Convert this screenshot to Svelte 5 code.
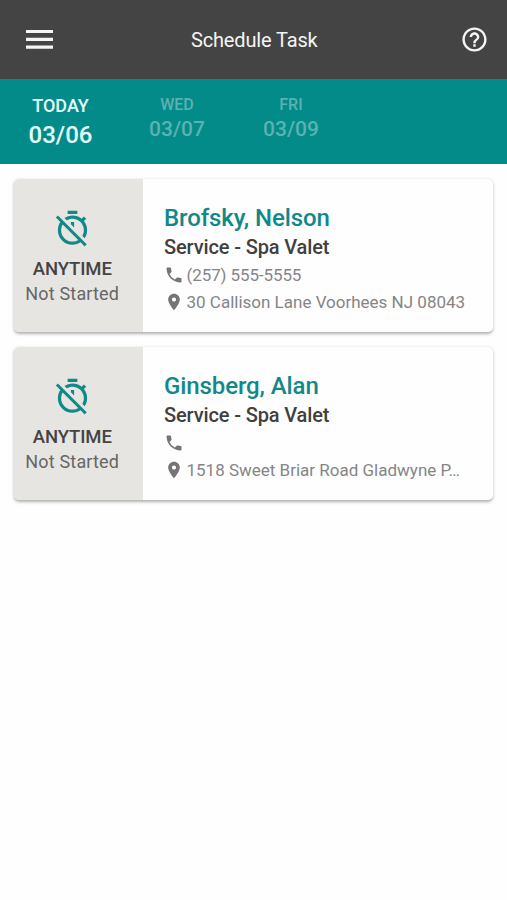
<script>
  const days = [
    { label: 'TODAY', date: '03/06', active: true },
    { label: 'WED', date: '03/07', active: false },
    { label: 'FRI', date: '03/09', active: false }
  ];
  const tasks = [
    { name: 'Brofsky, Nelson', job: 'Service - Spa Valet', phone: '(257) 555-5555', address: '30 Callison Lane Voorhees NJ 08043' },
    { name: 'Ginsberg, Alan', job: 'Service - Spa Valet', phone: '', address: '1518 Sweet Briar Road Gladwyne P…' }
  ];
</script>

<div class="screen">
  <header>
    <svg class="menu" viewBox="0 0 27 19"><path d="M0 0h27v3.1H0zM0 7.8h27v3.1H0zM0 15.6h27v3.1H0z" /></svg>
    <h1>Schedule Task</h1>
    <svg class="help" viewBox="0 0 24 24"><path d="M11 18h2v-2h-2v2zm1-16C6.48 2 2 6.48 2 12s4.480 10 10 10 10-4.480 10-10S17.520 2 12 2zm0 18c-4.410 0-8-3.590-8-8s3.590-8 8-8 8 3.590 8 8-3.590 8-8 8zm0-14c-2.210 0-4 1.790-4 4h2c0-1.100.9-2 2-2s2 .9 2 2c0 2-3 1.750-3 5h2c0-2.250 3-2.500 3-5 0-2.210-1.790-4-4-4z" /></svg>
  </header>

  <nav>
    {#each days as day}
      <div class="day" class:active={day.active}>
        <span class="label">{day.label}</span>
        <span class="date">{day.date}</span>
      </div>
    {/each}
  </nav>

  <main>
    {#each tasks as task}
      <article>
        <div class="status">
          <svg class="timer" viewBox="0 0 24 24"><path d="M19.04 4.55l-1.42 1.42C16.07 4.74 14.12 4 12 4c-1.83 0-3.53.55-4.95 1.48l1.46 1.46C9.53 6.35 10.73 6 12 6c3.87 0 7 3.13 7 7 0 1.27-.35 2.47-.94 3.49l1.45 1.45C20.45 16.53 21 14.83 21 13c0-2.12-.74-4.07-1.97-5.61l1.42-1.42-1.41-1.42zM15 1H9v2h6V1zm-4 8.44l2 2V8h-2v1.44zM3.02 4L1.75 5.27 4.5 8.03C3.55 9.45 3 11.16 3 13c0 4.97 4.02 9 9 9 1.84 0 3.55-.55 4.98-1.5l2.5 2.5 1.27-1.27-7.71-7.71L3.02 4zM12 20c-3.87 0-7-3.13-7-7 0-1.28.35-2.48.95-3.52l9.56 9.56c-1.03.61-2.23.96-3.51.96z" /></svg>
          <span class="when">ANYTIME</span>
          <span class="state">Not Started</span>
        </div>
        <div class="info">
          <h2>{task.name}</h2>
          <h3>{task.job}</h3>
          <div class="row phone">
            <svg viewBox="0 0 24 24"><path d="M6.62 10.79c1.44 2.83 3.76 5.14 6.59 6.59l2.2-2.2c.27-.27.67-.36 1.02-.24 1.12.37 2.33.57 3.57.57.55 0 1 .45 1 1V20c0 .55-.45 1-1 1-9.39 0-17-7.61-17-17 0-.55.45-1 1-1h3.5c.55 0 1 .45 1 1 0 1.25.2 2.45.57 3.57.11.35.03.74-.25 1.02l-2.2 2.2z" /></svg>
            <span>{task.phone}</span>
          </div>
          <div class="row address">
            <svg viewBox="0 0 24 24"><path d="M12 2C8.130 2 5 5.130 5 9c0 5.250 7 13 7 13s7-7.750 7-13c0-3.870-3.130-7-7-7zm0 9.500c-1.380 0-2.500-1.120-2.500-2.500s1.120-2.500 2.500-2.500 2.500 1.120 2.500 2.500-1.120 2.500-2.500 2.500z" /></svg>
            <span>{task.address}</span>
          </div>
        </div>
      </article>
    {/each}
  </main>
</div>

<style>
  :global(body) { background: #fefefe; }
  .screen {
    height: 900px;
    background: #fefefe;
    font-family: Roboto, "Liberation Sans", sans-serif;
    overflow: hidden;
  }
  .screen * { box-sizing: border-box; }
  svg { display: block; flex: none; fill: currentColor; }
  h1, h2, h3 { margin: 0; white-space: nowrap; }
  header {
    display: flex;
    align-items: center;
    justify-content: space-between;
    height: 79px;
    padding: 0 17.500px 0 26px;
    background: #444;
    color: #f5f5f5;
  }
  .menu { width: 27px; height: 19px; }
  .help { width: 29px; height: 29px; }
  h1 { font-size: 20px; font-weight: 400; line-height: 24px; letter-spacing: -.14px; padding: 1px 5px 0 0; }
  nav {
    display: flex;
    height: 84.500px;
    padding-left: 3.500px;
    background: #038b8a;
  }
  .day {
    display: flex;
    flex-direction: column;
    align-items: center;
    width: 114px;
    padding: 16px 0 0 5px;
    color: #5bb2b2;
    font-weight: 500;
  }
  .day.active { color: #e6ffff; padding-left: 0; }
  .label { font-size: 16px; line-height: 20px; }
  .date { font-size: 21px; line-height: 24px; padding-top: 2px; }
  .active .label { font-size: 18px; line-height: 22px; }
  .active .date { font-size: 24px; line-height: 28px; padding-top: 4px; }
  main {
    display: flex;
    flex-direction: column;
    gap: 15.500px;
    padding: 15px 14px 0;
  }
  article {
    display: flex;
    height: 153px;
    border-radius: 5px;
    background: #fefefe;
    box-shadow: 0 1.500px 3px rgba(0, 0, 0, .3);
    overflow: hidden;
  }
  .status {
    display: flex;
    flex-direction: column;
    align-items: center;
    width: 128.500px;
    padding: 30px 12px 0 0;
    background: #e6e5e2;
  }
  .timer { width: 39px; height: 39px; color: #128888; }
  .when { margin-top: 10px; font-size: 18.500px; line-height: 22px; letter-spacing: -.1px; font-weight: 500; color: #444; white-space: nowrap; }
  .state { margin-top: 3px; font-size: 18px; line-height: 22px; letter-spacing: .17px; color: #666; white-space: nowrap; }
  .info { padding: 25px 0 0 21.500px; }
  h2 { font-size: 24px; line-height: 28px; letter-spacing: -.1px; font-weight: 500; color: #128888; }
  h3 { font-size: 20px; line-height: 24px; letter-spacing: -.13px; font-weight: 500; color: #404040; margin-top: 3px; }
  .row {
    display: flex;
    align-items: center;
    height: 20px;
    gap: 2.500px;
    font-size: 17px;
    color: #858585;
    white-space: nowrap;
  }
  .row svg { width: 20px; height: 20px; color: #757575; }
  .phone { margin-top: 6px; letter-spacing: -.1px; }
  .address { margin-top: 7px; }
</style>
